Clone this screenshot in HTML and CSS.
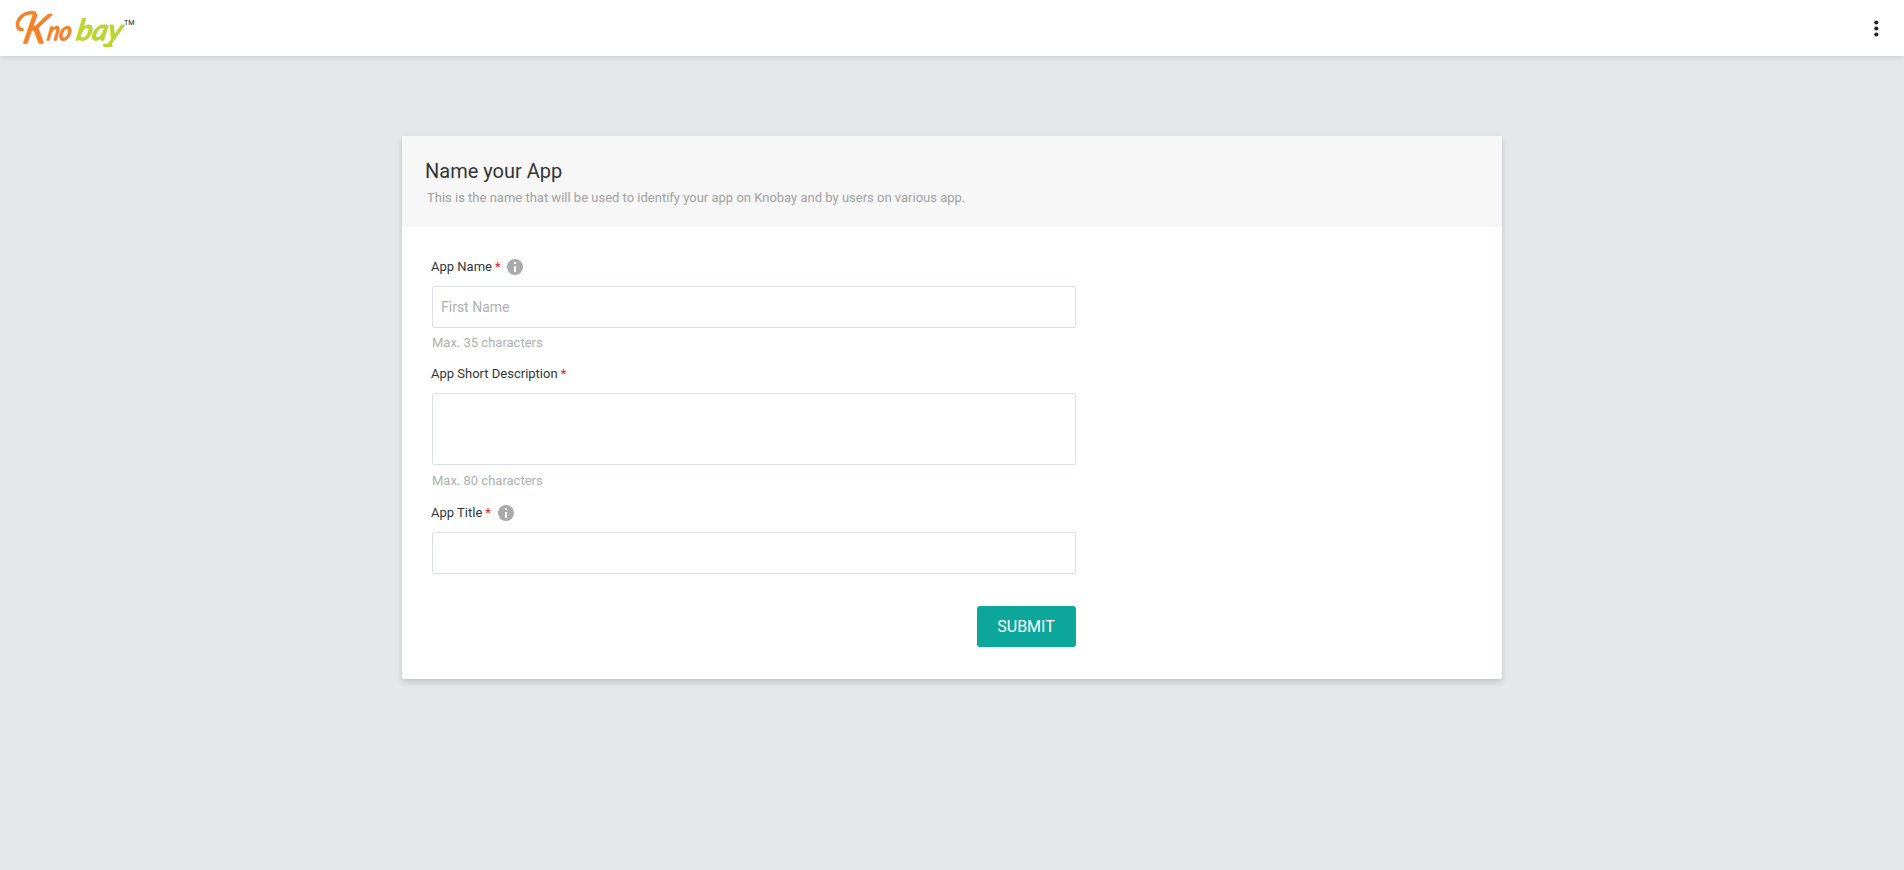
FILE: index.html
```html
<!DOCTYPE html>
<html lang="en">
<head>
<meta charset="utf-8">
<title>Knobay</title>
<link rel="stylesheet" href="styles.css">
</head>
<body>
<header class="topbar">
  <svg class="logo" width="124" height="44" viewBox="12 6 124 44" role="img" aria-label="Knobay">
    <path class="swash" d="M22 29.500C16.500 29.500 16 22 21 17C24.500 13.500 29 12 34.500 13"/>
    <text class="word kno" transform="translate(22 42.500) skewX(-13)" x="0" y="0" textLength="22.500" lengthAdjust="spacingAndGlyphs" font-size="40">K</text>
    <text class="word kno" transform="translate(46.500 39.500) skewX(-10)" x="0" y="0" textLength="24" lengthAdjust="spacingAndGlyphs" font-size="26">no</text>
    <text class="word bay" transform="translate(75.500 39.500) skewX(-10)" x="0" y="0" textLength="45.500" lengthAdjust="spacingAndGlyphs" font-size="29">bay</text>
    <path class="tail" d="M104.500 45.300H111"/>
    <text class="tm" x="124" y="25" textLength="10.500" lengthAdjust="spacingAndGlyphs">TM</text>
  </svg>
  <button class="menu" type="button" aria-label="Menu">
    <svg width="24" height="24" viewBox="0 0 24 24"><circle cx="12.300" cy="6.500" r="2.100"/><circle cx="12.300" cy="12.500" r="2.100"/><circle cx="12.300" cy="18.500" r="2.100"/></svg>
  </button>
</header>
<main class="card">
  <div class="card-head">
    <h1>Name your App</h1>
    <p>This is the name that will be used to identify your app on Knobay and by users on various app.</p>
  </div>
  <form class="form">
    <label class="label" for="name">App Name <b>*</b>
      <svg class="info" viewBox="0 0 16 16"><circle cx="8" cy="8" r="8"/><path d="M7 3h2v2H7zM7 7h2v6H7z"/></svg>
    </label>
    <input class="field" id="name" type="text" placeholder="First Name">
    <div class="hint">Max. 35 characters</div>
    <label class="label" for="desc">App Short Description <b>*</b></label>
    <textarea class="field area" id="desc"></textarea>
    <div class="hint area-hint">Max. 80 characters</div>
    <label class="label title-label" for="title">App Title <b>*</b>
      <svg class="info" viewBox="0 0 16 16"><circle cx="8" cy="8" r="8"/><path d="M7 3h2v2H7zM7 7h2v6H7z"/></svg>
    </label>
    <input class="field" id="title" type="text">
    <button class="submit" type="button">SUBMIT</button>
  </form>
</main>
</body>
</html>
```
FILE: styles.css
```css
* { box-sizing: border-box; }
body {
  margin: 0;
  min-height: 870px;
  background: #e4e8eb;
  font-family: Roboto, "Liberation Sans", sans-serif;
  color: #333639;
}
.topbar {
  height: 56px;
  padding: 0 16px 0 12px;
  display: flex;
  align-items: center;
  justify-content: space-between;
  background: #fff;
  box-shadow: 0 1px 6px rgba(60, 70, 80, .18);
}
.logo { display: block; overflow: visible; }
.word {
  font-family: Lato, sans-serif;
  font-weight: 400;
  font-style: italic;
  stroke-width: 1.4;
  stroke-linejoin: round;
}
.kno { fill: #f58227; stroke: #f58227; }
.bay { fill: #bcd530; stroke: #bcd530; }
.swash { fill: none; stroke: #f58227; stroke-width: 3.6; stroke-linecap: round; }
.tail { fill: none; stroke: #bcd530; stroke-width: 3.2; stroke-linecap: round; }
.tm { font-size: 8px; fill: #222; }
.menu { border: 0; padding: 0; background: none; height: 24px; }
.menu svg { display: block; fill: #222; }
.card {
  width: 1100px;
  height: 543px;
  margin: 80px auto 0;
  background: #fff;
  border-radius: 2px;
  overflow: hidden;
  box-shadow: 0 3px 6px rgba(60, 70, 80, .22);
}
.card-head { height: 91px; padding: 23px 24px 0; background: #f7f7f7; }
h1 {
  margin: 0 0 0 -1px;
  font-size: 20px;
  line-height: 24px;
  font-weight: 400;
}
p { margin: 7px 0 0 1px; font-size: 13px; line-height: 16px; color: #a0a1a2; }
.form { width: 674px; padding: 30px 0 0 30px; display: flex; flex-direction: column; }
.label {
  height: 20px;
  margin-left: -1px;
  padding-bottom: 1px;
  display: flex;
  align-items: center;
  gap: 3px;
  font-size: 13px;
}
.label b { font-weight: 400; color: #f01820; }
.info { width: 16px; height: 16px; margin: 1px 0 0 3px; fill: #aaa; }
.title-label .info { margin-left: 4px; }
.info path { fill: #fff; }
.field {
  width: 644px;
  height: 42px;
  margin: 9px 0 0;
  padding: 0 8px;
  border: 1px solid #dee1e4;
  border-radius: 2px;
  background: #fff;
  font: 14px Roboto, sans-serif;
  resize: none;
}
.field::placeholder { color: #b0b0b0; opacity: 1; }
.area { height: 72px; }
.hint { height: 16px; margin: 7px 0 13px; font-size: 13px; line-height: 16px; color: #b0b0b0; }
.area-hint { margin: 8px 0 14px; }
.submit {
  align-self: flex-end;
  width: 99px;
  height: 41px;
  margin-top: 32px;
  padding: 0 1px 0 0;
  border: 0;
  border-radius: 3px;
  background: #0ca69a;
  color: #fff;
  font: 16px Roboto, sans-serif;
}
```
